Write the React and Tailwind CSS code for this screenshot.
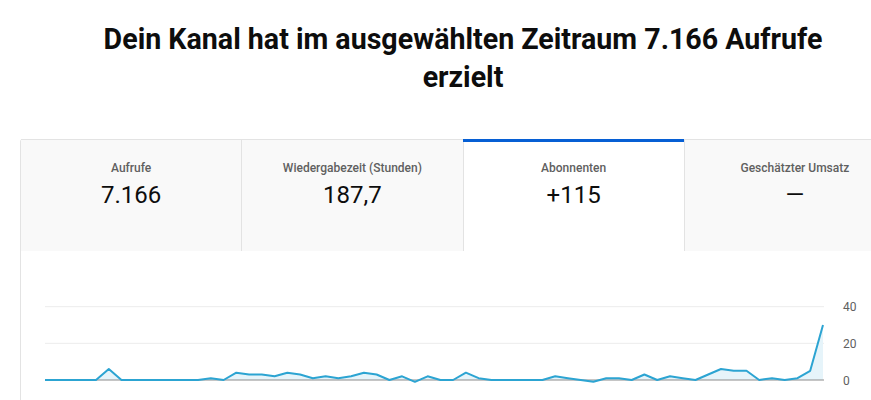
import React from "react";

const tabs = [
  { label: "Aufrufe", value: "7.166" },
  { label: "Wiedergabezeit (Stunden)", value: "187,7" },
  { label: "Abonnenten", value: "+115", active: true },
  { label: "Geschätzter Umsatz", value: "—" },
];

// Abonnenten pro Tag
const data = [
  0, 0, 0, 0, 0, 6, 0, 0, 0, 0, 0, 0, 0, 1, 0, 4, 3, 3, 2, 4, 3, 1, 2, 1, 2, 4,
  3, 0, 2, -1, 2, 0, 0, 4, 1, 0, 0, 0, 0, 0, 2, 1, 0, -1, 1, 1, 0, 3, 0, 2, 1,
  0, 3, 6, 5, 5, 0, 1, 0, 1, 5, 30,
];

const W = 778;
const BASE = 90;
const UNIT = 73.3 / 40;

function Chart() {
  const step = W / (data.length - 1);
  const pts = data.map((v, i) => [i * step, BASE - v * UNIT]);
  const line = pts.map((p) => p[0].toFixed(1) + "," + p[1].toFixed(1)).join(" ");
  const area = `0,${BASE} ${line} ${W},${BASE}`;
  const grid = [
    { v: 40, y: BASE - 40 * UNIT },
    { v: 20, y: BASE - 20 * UNIT },
  ];
  return (
    <svg width="840" height="120" className="block">
      {grid.map((g) => (
        <line key={g.v} x1="0" x2={W + 1} y1={g.y} y2={g.y} stroke="#ececec" strokeWidth="1" />
      ))}
      <polygon points={area} fill="#e6f4fa" />
      <line x1="0" x2={W + 1} y1={BASE} y2={BASE} stroke="#8c8c8c" strokeWidth="1" />
      <polyline points={line} fill="none" stroke="#2ca4d2" strokeWidth="2" strokeLinejoin="round" />
      {[...grid, { v: 0, y: BASE }].map((g) => (
        <text
          key={"t" + g.v}
          x={W + 20}
          y={g.y + 4.5}
          fontSize="12"
          fill="#606060"
          fontFamily="Roboto, sans-serif"
        >
          {g.v}
        </text>
      ))}
    </svg>
  );
}

export default function App() {
  return (
    <div className="w-full h-[400px] overflow-hidden bg-white font-['Roboto',sans-serif]">
      <div className="ml-[20px] w-[886px]">
        <h1 className="max-w-[760px] mx-auto pt-[20px] text-center text-[28.6px] leading-[38px] font-bold text-[#0d0d0d]">
          Dein Kanal hat im ausgewählten Zeitraum 7.166 Aufrufe erzielt
        </h1>
        <div className="mt-[43px] border-l border-[#e3e3e3] rounded-tl-[3px]">
          <div className="grid grid-cols-4">
            {tabs.map((t) => (
              <div
                key={t.label}
                className={
                  "relative h-[112px] border-t border-r border-[#e3e3e3] pt-[20px] text-center " +
                  (t.active ? "bg-white" : "bg-[#f9f9f9]")
                }
              >
                {t.active && (
                  <div className="absolute -top-px -left-px right-0 h-[3px] bg-[#065fd4]" />
                )}
                <div className="text-[12px] leading-[16px] font-medium text-[#606060]">
                  {t.label}
                </div>
                <div className="mt-[3px] text-[24px] leading-[32px] text-[#0d0d0d]">
                  {t.value}
                </div>
              </div>
            ))}
          </div>
          <div className="pt-[39px] pl-[24px]">
            <Chart />
          </div>
        </div>
      </div>
    </div>
  );
}
